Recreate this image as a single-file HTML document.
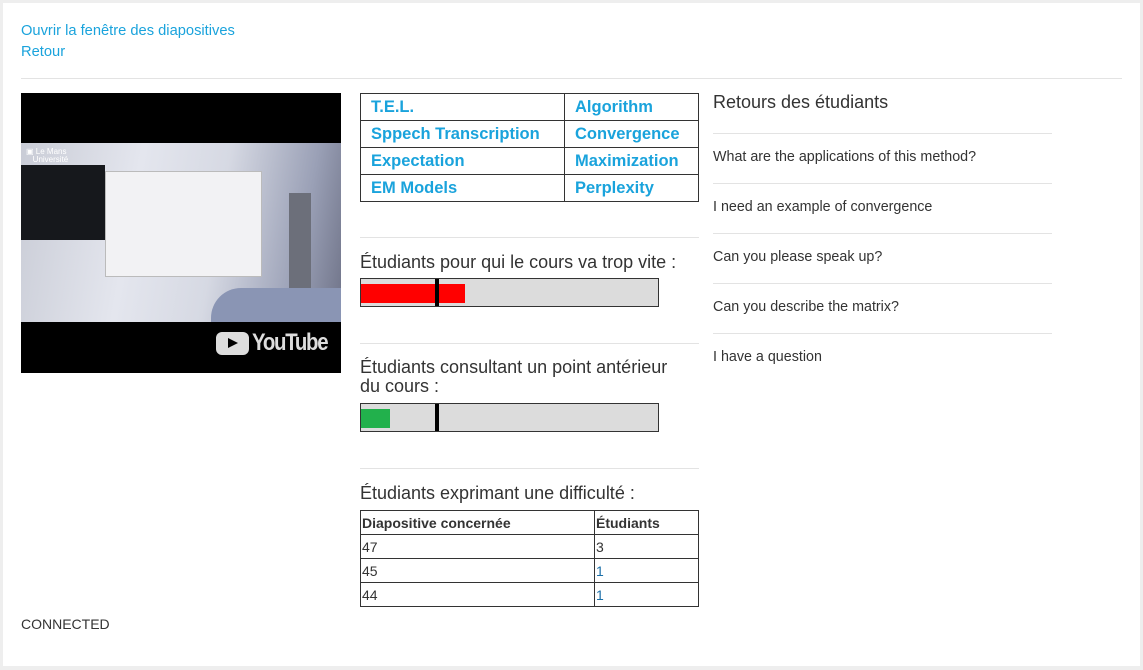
<!DOCTYPE html>
<html><head><meta charset="utf-8"><style>
body{margin:0;background:#eee;font-family:"Liberation Sans",sans-serif;color:#333;}
.page{position:absolute;left:3px;top:3px;width:1137px;height:663px;background:#fff;}
a{color:#1aa3dc;text-decoration:none;font-size:14.7px;}
.abs{position:absolute;}
.hr{position:absolute;height:1px;background:#e3e3e3;}
table.kw{position:absolute;left:357px;top:90px;width:339px;border-collapse:collapse;}
table.kw td{border:1px solid #333;height:26px;padding:0 0 0 10px;color:#1aa3dc;font-weight:bold;font-size:16.5px;line-height:26px;}
.h{position:absolute;font-size:18px;color:#333;line-height:19px;}
.bar{position:absolute;width:297px;height:27px;background:#dcdcdc;border:1px solid #333;}
table.d{position:absolute;left:357px;top:507px;width:339px;border-collapse:collapse;font-size:14px;}
table.d td{border:1px solid #333;height:23px;padding:0 0 0 1px;}
.q{position:absolute;left:710px;width:339px;font-size:14.3px;}
</style></head><body><div class="page">
<a class="abs" style="left:18px;top:20px">Ouvrir la fenêtre des diapositives</a>
<a class="abs" style="left:18px;top:41px">Retour</a>
<div class="hr" style="left:18px;top:75px;width:1101px"></div>
<div class="abs" style="left:18px;top:90px;width:320px;height:280px;background:#000">
<div class="abs" style="left:0;top:50px;width:320px;height:179px;background:linear-gradient(100deg,#c9ccd6 0%,#e4e6ee 35%,#d6d9e3 60%,#9aa0b6 85%,#6f7388 100%)">
<div class="abs" style="left:0;top:22px;width:84px;height:75px;background:#16181c"></div>
<div class="abs" style="left:84px;top:28px;width:155px;height:104px;background:#f2f2f4;border:1px solid #bbb"></div>
<div class="abs" style="left:268px;top:50px;width:22px;height:105px;background:#6c6f7a"></div>
<div class="abs" style="left:190px;top:145px;width:130px;height:34px;background:#8a95b4;border-radius:30px 0 0 0"></div>
<div class="abs" style="left:5px;top:5px;color:#fff;font-size:8px;line-height:8px">▣ Le Mans<br>&nbsp;&nbsp;&nbsp;Université</div>
</div>
<div class="abs" style="left:195px;top:239px;width:33px;height:23px;background:#ddd;border-radius:6px"></div>
<div class="abs" style="left:207px;top:245px;width:0;height:0;border-left:10px solid #000;border-top:5.5px solid transparent;border-bottom:5.5px solid transparent"></div>
<div class="abs" style="left:231px;top:236px;color:#ddd;font-size:24px;font-weight:bold;letter-spacing:-1.5px;transform:scaleX(.85);transform-origin:left">YouTube</div>
</div>
<table class="kw">
<tr><td style="width:193px">T.E.L.</td><td>Algorithm</td></tr>
<tr><td>Sppech Transcription</td><td>Convergence</td></tr>
<tr><td>Expectation</td><td>Maximization</td></tr>
<tr><td>EM Models</td><td>Perplexity</td></tr>
</table>
<div class="hr" style="left:357px;top:234px;width:339px"></div>
<div class="h" style="left:357px;top:250px">Étudiants pour qui le cours va trop vite :</div>
<div class="bar" style="left:357px;top:275px"><div class="abs" style="left:0;top:5px;width:104px;height:19px;background:#f00"></div><div class="abs" style="left:74px;top:0;width:4px;height:27px;background:#000"></div></div>
<div class="hr" style="left:357px;top:340px;width:339px"></div>
<div class="h" style="left:357px;top:355px">Étudiants consultant un point antérieur<br>du cours :</div>
<div class="bar" style="left:357px;top:400px"><div class="abs" style="left:0;top:5px;width:29px;height:19px;background:#22b14c"></div><div class="abs" style="left:74px;top:0;width:4px;height:27px;background:#000"></div></div>
<div class="hr" style="left:357px;top:465px;width:339px"></div>
<div class="h" style="left:357px;top:481px">Étudiants exprimant une difficulté :</div>
<table class="d">
<tr><td style="width:232px;font-weight:bold">Diapositive concernée</td><td style="font-weight:bold">Étudiants</td></tr>
<tr><td>47</td><td>3</td></tr>
<tr><td>45</td><td style="color:#1a6fa8">1</td></tr>
<tr><td>44</td><td style="color:#1a6fa8">1</td></tr>
</table>
<div class="h" style="left:710px;top:90px">Retours des étudiants</div>
<div class="hr" style="left:710px;top:130px;width:339px"></div>
<div class="q" style="top:146px">What are the applications of this method?</div>
<div class="hr" style="left:710px;top:180px;width:339px"></div>
<div class="q" style="top:196px">I need an example of convergence</div>
<div class="hr" style="left:710px;top:230px;width:339px"></div>
<div class="q" style="top:246px">Can you please speak up?</div>
<div class="hr" style="left:710px;top:280px;width:339px"></div>
<div class="q" style="top:296px">Can you describe the matrix?</div>
<div class="hr" style="left:710px;top:330px;width:339px"></div>
<div class="q" style="top:346px">I have a question</div>
<div class="abs" style="left:18px;top:613px;font-size:14px">CONNECTED</div>
</div></body></html>
